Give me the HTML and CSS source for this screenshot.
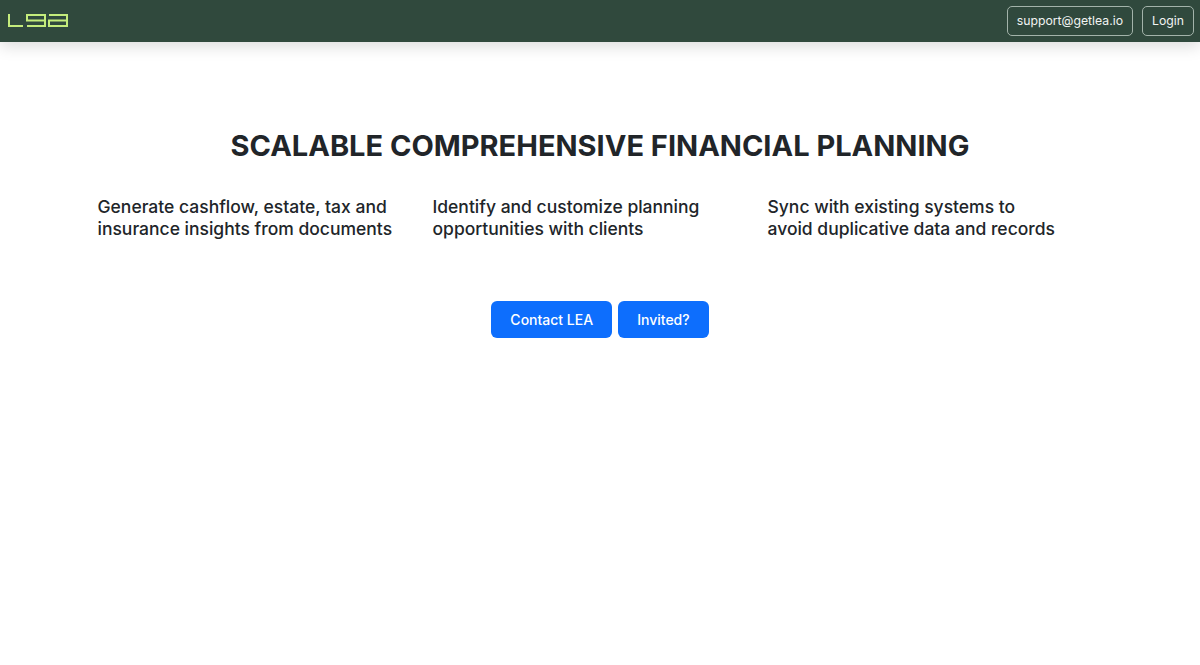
FILE: index.html
```html
<!DOCTYPE html>
<html lang="en">
<head>
  <meta charset="UTF-8" />
  <meta name="viewport" content="width=device-width, initial-scale=1.0" />
  <title>LEA</title>
  <link rel="stylesheet" href="styles.css">
</head>
<body>
  <nav class="navbar">
    <svg class="logo" width="60" height="14" viewBox="0 0 60 14" fill="none" stroke="#c4ec7c" stroke-width="2">
      <path d="M1 0V12H15" />
      <path d="M19 12H37V1H19V6.500H37" />
      <path d="M41 1H59V12H41V6.500H59" />
    </svg>
    <div class="nav-actions">
      <a class="nav-btn" href="#">support@getlea.io</a>
      <a class="nav-btn" href="#">Login</a>
    </div>
  </nav>

  <main class="hero">
    <h1>SCALABLE COMPREHENSIVE FINANCIAL PLANNING</h1>
    <div class="features">
      <p>Generate cashflow, estate, tax and insurance insights from documents</p>
      <p>Identify and customize planning opportunities with clients</p>
      <p>Sync with existing systems to avoid duplicative data and records</p>
    </div>
    <div class="cta">
      <a class="btn" href="#">Contact LEA</a>
      <a class="btn" href="#">Invited?</a>
    </div>
  </main>
</body>
</html>
```

FILE: styles.css
```css
* {
  box-sizing: border-box;
}

body {
  margin: 0;
  font-family: Inter, 'Liberation Sans', sans-serif;
  color: #212529;
  background-color: white;
}

a {
  text-decoration: none;
}

.navbar {
  display: flex;
  justify-content: space-between;
  align-items: center;
  height: 42px;
  padding: 0 6px 0 8px;
  background-color: #30493d;
  box-shadow: 0 4px 16px rgba(0, 0, 0, 0.15);
}

.nav-actions {
  display: flex;
  gap: 9px;
}

.nav-btn {
  padding: 6px 9px;
  font-size: 12.250px;
  line-height: 16px;
  color: #f1f4f2;
  border: 1px solid #a3b3aa;
  border-radius: 5px;
}

.hero {
  padding-top: 86px;
}

h1 {
  margin: 0;
  font-size: 29px;
  line-height: 36px;
  font-weight: 700;
  text-align: center;
}

.features {
  display: grid;
  grid-template-columns: repeat(3, 335px);
  justify-content: center;
  margin-top: 32px;
}

.features p {
  margin: 0;
  padding-right: 40px;
  font-size: 17.500px;
  line-height: 22px;
  font-weight: 500;
}

.cta {
  display: flex;
  justify-content: center;
  gap: 6px;
  margin-top: 61px;
}

.btn {
  padding: 8px 19px;
  font-size: 14px;
  line-height: 21px;
  font-weight: 500;
  color: white;
  background-color: #0d6efd;
  border-radius: 6px;
}
```
